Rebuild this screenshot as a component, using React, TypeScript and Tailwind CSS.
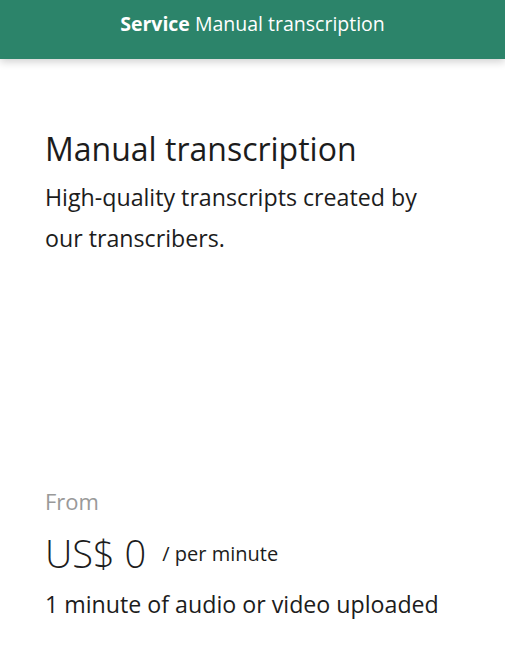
export default function App() {
  return (
    <div className="min-h-[651px] w-full bg-white text-[#1c1c1c]" style={{ fontFamily: "'Open Sans', 'Noto Sans', sans-serif" }}>
      <header className="flex h-[59px] items-start justify-center bg-[#2c846a] pt-[9px] text-[19.5px] leading-[1.5] text-white shadow-[0_3px_8px_rgba(0,0,0,0.18)]">
        <span><b className="font-bold">Service</b> Manual transcription</span>
      </header>
      <main className="px-[45px]">
        <h1 className="mt-[70px] text-[32px] leading-[40px]">Manual transcription</h1>
        <p className="mt-[8px] w-[390px] text-[23.2px] leading-[41px]">High-quality transcripts created by our transcribers.</p>
        <div className="mt-[229px] text-[22px] leading-[26px] text-[#999]">From</div>
        <div className="mt-[17px] flex items-end gap-[16px]">
          <span className="text-[38px] font-light leading-[44px]">US$ 0</span>
          <span className="mb-[6px] text-[20px] leading-[30px]">/ per minute</span>
        </div>
        <div className="mt-[15px] text-[23.2px] leading-[28px]">1 minute of audio or video uploaded</div>
      </main>
    </div>
  );
}
